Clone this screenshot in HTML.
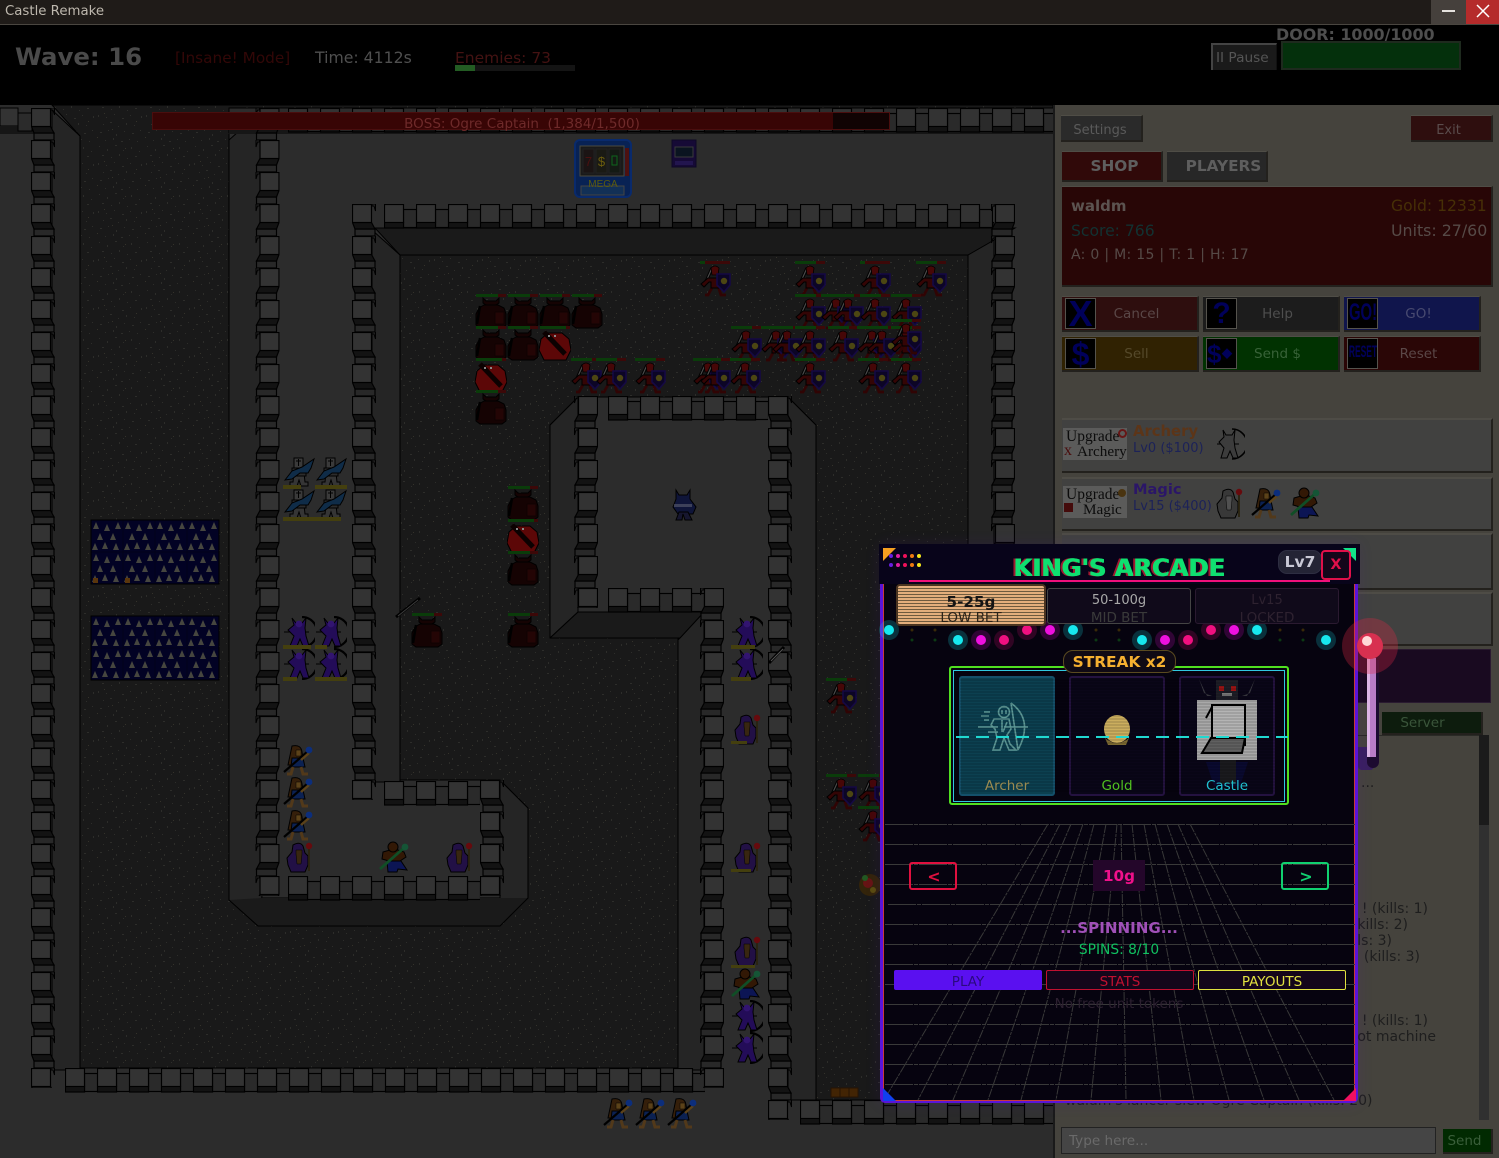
<!DOCTYPE html>
<html><head><meta charset="utf-8"><title>Castle Remake</title>
<style>
html,body{margin:0;padding:0;background:#000;overflow:hidden}
body{width:1499px;height:1158px;position:relative;overflow:hidden;font-family:"DejaVu Sans","Liberation Sans",sans-serif;font-size:13px}
.a,.t{position:absolute}
.t{white-space:pre;line-height:16px}
.c{text-align:center}
.w{position:absolute;left:0;top:0;width:1499px;height:1158px;overflow:hidden}
.sf{font-family:"DejaVu Sans","Liberation Sans",sans-serif;font-weight:bold}
.btn{position:absolute;box-sizing:border-box;border-bottom:2px solid #23211d;border-right:2px solid #23211d;border-top:1px solid #4f4d46;text-align:center}
.ic{position:absolute;left:3px;top:1px;width:31px;height:31px;box-sizing:border-box;background:#000;border:1px solid #55534d;color:#00005a;overflow:hidden;text-align:center;font-family:"Liberation Sans",sans-serif;font-weight:bold}
.ic span{position:absolute;left:50%;white-space:nowrap}
.lab{position:absolute;left:14px;right:0;top:9px;line-height:16px;font-size:13.5px}
.card{position:absolute;left:1062px;width:431px;box-sizing:border-box;background:#414140;border-top:2px solid #4e4c46;border-right:2px solid #23211d;border-bottom:2px solid #23211d}
.up{position:absolute;background:#5b5b5a;width:64px;height:32px;font-family:"Liberation Serif",serif;color:#0c0c0c;overflow:hidden}
.up span{position:absolute;white-space:pre;line-height:15px}
.lg{color:#1e1e1e;font-size:14px}
svg{position:absolute;left:0;top:0}
</style></head><body>

<!-- MAP -->
<svg width="1499" height="1158" viewBox="0 0 1499 1158" style="z-index:1">
<defs>
<pattern id="sp" width="48" height="48" patternUnits="userSpaceOnUse">
<rect width="48" height="48" fill="#191919"/>
<g fill="#2d2d2a"><rect x="3" y="2" width="1" height="1"/><rect x="11" y="5" width="1" height="2"/><rect x="19" y="1" width="2" height="1"/><rect x="27" y="6" width="1" height="1"/><rect x="35" y="3" width="1" height="2"/><rect x="43" y="7" width="1" height="1"/><rect x="6" y="11" width="2" height="1"/><rect x="15" y="13" width="1" height="1"/><rect x="23" y="10" width="1" height="2"/><rect x="31" y="14" width="1" height="1"/><rect x="39" y="12" width="2" height="1"/><rect x="2" y="19" width="1" height="2"/><rect x="10" y="21" width="1" height="1"/><rect x="18" y="18" width="1" height="1"/><rect x="26" y="22" width="2" height="1"/><rect x="34" y="19" width="1" height="1"/><rect x="45" y="20" width="1" height="2"/><rect x="7" y="28" width="1" height="1"/><rect x="14" y="26" width="2" height="1"/><rect x="22" y="30" width="1" height="1"/><rect x="30" y="27" width="1" height="2"/><rect x="38" y="29" width="1" height="1"/><rect x="4" y="36" width="2" height="1"/><rect x="12" y="34" width="1" height="1"/><rect x="20" y="38" width="1" height="2"/><rect x="28" y="35" width="1" height="1"/><rect x="36" y="37" width="2" height="1"/><rect x="44" y="34" width="1" height="1"/><rect x="9" y="44" width="1" height="1"/><rect x="17" y="42" width="1" height="2"/><rect x="25" y="45" width="2" height="1"/><rect x="33" y="43" width="1" height="1"/><rect x="41" y="45" width="1" height="1"/></g>
<g fill="#34322a"><rect x="8" y="17" width="1" height="1"/><rect x="29" y="4" width="1" height="1"/><rect x="40" y="25" width="1" height="1"/><rect x="16" y="33" width="1" height="1"/><rect x="1" y="41" width="1" height="1"/></g>
</pattern>
<pattern id="vw" width="26" height="32" patternUnits="userSpaceOnUse">
<path d="M3 25h20v7H3z" fill="#282828" stroke="#000" stroke-width="1.2"/>
<path d="M0.5 18.5h19L23 25H3z" fill="#131313" stroke="#000" stroke-width="1.2"/>
<rect x=".5" y=".5" width="19" height="18" fill="#333" stroke="#000" stroke-width="1.2"/>
<path d="M20 0h3.5v7L22 2H20z" fill="#282828" stroke="#000"/>
</pattern>
<pattern id="hw" width="32" height="26" patternUnits="userSpaceOnUse">
<rect x="19.5" y="5.5" width="13" height="18" fill="#2a2a2a" stroke="#000" stroke-width="1.2"/>
<rect x=".5" y="18" width="19" height="6" fill="#131313" stroke="#000" stroke-width="1.2"/>
<rect x=".5" y=".5" width="19" height="18" fill="#333" stroke="#000" stroke-width="1.2"/>
</pattern>
<pattern id="spk" width="32" height="32" patternUnits="userSpaceOnUse">
<rect width="32" height="32" fill="#020224"/>
<path d="M5 2l3 7H2zM16 4l3 7h-6zM27 2l3 7h-6zM9 13l3 7H6zM22 13l3 7h-6zM4 23l3 7H1zM14 22l3 7h-6zM25 23l3 7h-6z" fill="#46463f"/>
<path d="M0 0h32v32H0z" fill="none" stroke="#02021a"/>
</pattern>
<g id="sb"><path d="M5 22L13 4" stroke="#000" stroke-width="3.2"/><path d="M5 22L13 4" stroke="#4a4a4a" stroke-width="1.2"/><path d="M14 22L9 31H6M19 22L22 31H27" stroke="#300404" stroke-width="2.8" fill="none"/><path d="M2 20L9 14H23V18H20V24H12V18H10L5 23z" fill="#340505" stroke="#000" stroke-width="1"/><path d="M12 4Q16 0 20 4L19 11H13z" fill="#460707" stroke="#000" stroke-width=".8"/><path d="M18 10h13v11l-6 7-7-7z" fill="#0c0526" stroke="#150944" stroke-width="1.6"/><circle cx="25" cy="17" r="3.2" fill="#4c4612"/></g>
<symbol id="so" viewBox="0 0 32 38"><rect x="1" y="2" width="21" height="3" fill="#0a3c0a"/><rect x="22" y="2" width="9" height="3" fill="#3c0808"/><use href="#sb" y="5"/></symbol>
<symbol id="sr" viewBox="0 0 32 38"><rect x="1" y="2" width="5" height="3" fill="#0a3c0a"/><rect x="6" y="2" width="25" height="3" fill="#3c0808"/><use href="#sb" y="5"/></symbol>
<symbol id="od" viewBox="0 0 32 36"><rect x="1" y="0" width="22" height="3" fill="#0a3c0a"/><rect x="23" y="0" width="8" height="3" fill="#3c0808"/><path d="M8 4v5l3 2h10l3-2V4l-3 3H11zM4 14L9 11H23L29 14L31 20V31L27 34H5L1 31V20z" fill="#150303" stroke="#000"/><rect x="20" y="18" width="9" height="12" fill="#240505" stroke="#100202"/><path d="M5 12L2 30" stroke="#000" stroke-width="2.5"/></symbol>
<symbol id="or" viewBox="0 0 32 36"><rect x="1" y="0" width="26" height="3" fill="#0a3c0a"/><rect x="27" y="0" width="4" height="3" fill="#3c0808"/><path d="M9 7H23L30 13L32 24L27 34H5L0 24L2 13z" fill="#5c0707" stroke="#000"/><path d="M5 6L26 28" stroke="#0c0101" stroke-width="5"/><rect x="9" y="9" width="2" height="2" fill="#888"/><rect x="15" y="9" width="2" height="2" fill="#888"/></symbol>
<symbol id="kn" viewBox="0 0 32 32"><path d="M11 17l-1 9H7v4h7l2-6 2 6h7v-4h-3l-1-9z" fill="#353535" stroke="#000"/><path d="M11 2h9v10h-9z" fill="#3a3a3a" stroke="#000"/><path d="M15.5 3v7M13 5h5" stroke="#000"/><path d="M9 12h14v8H9z" fill="#2c2c2c" stroke="#000"/><path d="M2 24L9 15 19 11 31 3 28 12 25 17 17 17 9 23z" fill="#0f2c48" stroke="#000"/></symbol>
<symbol id="pa" viewBox="0 0 32 32"><path d="M19 1A15 15 0 0 1 19 31" fill="none" stroke="#000" stroke-width="2.2"/><path d="M8 16L26 16M1 16h8" stroke="#000"/><path d="M9 2l4 5h6l4-5-1 10 1 8 3 10h-6l-3-7-3 7H7l4-10-6-6 6-5z" fill="#230c58" stroke="#000"/><circle cx="16" cy="8" r="3.4" fill="#321470"/></symbol>
<symbol id="pb" viewBox="0 0 32 32"><path d="M19 1A15 15 0 0 1 19 31" fill="none" stroke="#000" stroke-width="1.6"/><path d="M4 16H26" stroke="#000"/><path d="M10 2l3 5h6l3-5-1 10 1 8 3 10h-5l-3-7-3 7H8l3-10-5-6 5-5z" fill="#3c3c3c" stroke="#000"/></symbol>
<symbol id="wz" viewBox="0 0 32 32"><path d="M10 4Q17 0 20 5L22 12L25 15V24L22 31H8L5 24 4 17 9 11z" fill="#221045" stroke="#000"/><path d="M13 9h6v4l-1 10h-4l-1-10z" fill="#382610" stroke="#000" stroke-width=".5"/><path d="M26 7V30" stroke="#2a2410" stroke-width="1.8"/><circle cx="26" cy="5" r="3.2" fill="#660a0d"/></symbol>
<symbol id="wg" viewBox="0 0 32 32"><path d="M10 4Q17 0 20 5L22 12L25 15V24L22 31H8L5 24 4 17 9 11z" fill="#383838" stroke="#000"/><path d="M13 9h6v4l-1 10h-4l-1-10z" fill="#505050" stroke="#000" stroke-width=".5"/><path d="M26 7V30" stroke="#2a2410" stroke-width="1.8"/><circle cx="26" cy="5" r="3.2" fill="#660a0d"/></symbol>
<symbol id="rg" viewBox="0 0 32 32"><path d="M10 2Q19 0 20 8L22 21H6z" fill="#351f0a" stroke="#000"/><path d="M14 6h5v6h-5z" fill="#5c4219" stroke="#000" stroke-width=".5"/><path d="M10 14h11l2 9H9z" fill="#0b2152" stroke="#000"/><path d="M11 23l-2 7H5M19 23l2 7h5" stroke="#52391a" stroke-width="3" fill="none"/><path d="M2 28L25 8" stroke="#000" stroke-width="2.2"/><path d="M19 16L27 9" stroke="#5c4219" stroke-width="2.4"/><circle cx="27" cy="6" r="3.4" fill="#0c2e7c"/></symbol>
<symbol id="br" viewBox="0 0 32 32"><path d="M5 11L12 9H20L26 11 28 16 22 20H11L4 18z" fill="#321805" stroke="#000"/><circle cx="15" cy="6" r="5" fill="#321805" stroke="#000"/><path d="M9 20h14l6 9-9-1-1 3h-9z" fill="#0c1554" stroke="#000"/><path d="M2 28L27 6" stroke="#104e26" stroke-width="2.8"/><circle cx="27" cy="6" r="3.4" fill="#155536"/></symbol>
</defs>

<rect x="0" y="105" width="1053" height="1053" fill="#2c2c2c"/>
<!-- bands -->
<g fill="#252525" stroke="#000">
<path d="M52 110L80 136V1070H52z"/>
<path d="M229 140L238 132H262V896L258 926L229 900z"/>
<path d="M372 230L400 255V782H372z"/>
<path d="M500 780L528 808V898L500 926H258L262 898H500z"/>
<path d="M968 255L994 228V1100H968z"/>
<path d="M578 397L550 425V638L578 612z"/>
<path d="M788 397L816 425V1100H788z"/>
<path d="M678 640L704 612V1070H678z"/>
</g>
<path d="M375 228H1015L968 255H400z" fill="#1a1a1a" stroke="#000"/>
<path d="M578 612H704L680 638H550z" fill="#1a1a1a" stroke="#000"/>
<path d="M262 898H500L528 898L500 926H258L229 900z" fill="#1a1a1a"/>
<!-- speckled ground -->
<path d="M52 105H1053V108H229V900L258 926H500L528 898V808L500 780H400V255H968V1100H816V425L788 397H578L550 425V638H678V1068H80V136z" fill="url(#sp)" stroke="#000"/>
<rect x="229" y="127" width="824" height="7" fill="#161616"/>
<rect x="0" y="127" width="36" height="7" fill="#161616"/>
<rect x="18" y="113" width="14" height="18" fill="#2b2b2b" stroke="#000"/>
<rect x="0" y="108" width="18" height="18" fill="#333" stroke="#000"/>
<!-- walls -->
<rect transform="translate(288,108)" width="765" height="26" fill="url(#hw)"/>
<rect transform="translate(384,204)" width="610" height="26" fill="url(#hw)"/>
<rect transform="translate(384,781)" width="96" height="26" fill="url(#hw)"/>
<rect transform="translate(288,876)" width="192" height="26" fill="url(#hw)"/>
<rect transform="translate(608,396)" width="160" height="26" fill="url(#hw)"/>
<rect transform="translate(608,588)" width="96" height="26" fill="url(#hw)"/>
<rect transform="translate(65,1068)" width="640" height="26" fill="url(#hw)"/>
<rect transform="translate(800,1100)" width="253" height="26" fill="url(#hw)"/>
<rect transform="translate(31,108)" width="26" height="980" fill="url(#vw)"/>
<rect transform="translate(279.5,108) scale(-1,1)" width="26" height="788" fill="url(#vw)"/>
<rect transform="translate(352,204)" width="26" height="596" fill="url(#vw)"/>
<rect transform="translate(480,780)" width="26" height="116" fill="url(#vw)"/>
<rect transform="translate(598,396) scale(-1,1)" width="26" height="212" fill="url(#vw)"/>
<rect transform="translate(724,588) scale(-1,1)" width="26" height="500" fill="url(#vw)"/>
<rect transform="translate(768,396)" width="26" height="724" fill="url(#vw)"/>
<rect transform="translate(1015,204) scale(-1,1)" width="26" height="340" fill="url(#vw)"/>
<!-- spikes -->
<rect transform="translate(91,520)" width="128" height="64" fill="url(#spk)" stroke="#000"/>
<rect transform="translate(91,616)" width="128" height="64" fill="url(#spk)" stroke="#000"/>
<g fill="#5a360c"><rect x="93" y="578" width="5" height="5"/><rect x="125" y="578" width="5" height="5"/></g>
<!-- machines -->
<g transform="translate(575,140)">
<rect width="56" height="57" rx="5" fill="#082254" stroke="#092a6c" stroke-width="2"/>
<rect x="5" y="6" width="44" height="30" fill="#1a1a1a" stroke="#4a4a40"/>
<rect x="8" y="9" width="11" height="24" fill="#1b1414" stroke="#222"/><rect x="21" y="9" width="11" height="24" fill="#1a1a14" stroke="#222"/><rect x="34" y="9" width="11" height="24" fill="#141a14" stroke="#222"/>
<text x="13.5" y="26" font-size="13" fill="#4a1010" text-anchor="middle" font-family="Liberation Sans">7</text>
<text x="26.5" y="26" font-size="13" fill="#6a5c0e" text-anchor="middle" font-family="Liberation Sans">$</text>
<rect x="37" y="16" width="5" height="9" fill="none" stroke="#0e661c"/>
<rect x="50" y="8" width="4" height="28" fill="#4c1111"/>
<rect x="6" y="46" width="43" height="9" fill="#123056" stroke="#444"/>
<text x="28" y="47" font-size="10" fill="#5c5c0e" text-anchor="middle" font-family="Liberation Sans">MEGA</text>
</g>
<g transform="translate(672,140)"><rect width="24" height="27" fill="#160a36" stroke="#0e0826"/><rect x="3" y="7" width="18" height="10" fill="#0a1420" stroke="#3a3a3a"/><rect x="3" y="21" width="18" height="4" fill="#22154e"/></g>
<!-- orange crate -->
<g fill="#422404" stroke="#261403"><rect x="831" y="1088" width="9" height="9"/><rect x="840" y="1088" width="9" height="9"/><rect x="849" y="1088" width="9" height="9"/></g>
<!-- enemies -->
<g>
<use href="#sr" x="699" y="259" width="32" height="38"/>
<use href="#so" x="794" y="259" width="32" height="38"/><use href="#sr" x="859" y="259" width="32" height="38"/><use href="#so" x="915" y="259" width="32" height="38"/>
<use href="#so" x="794" y="292" width="32" height="38"/><use href="#so" x="820" y="292" width="32" height="38"/><use href="#so" x="832" y="292" width="32" height="38"/><use href="#so" x="859" y="292" width="32" height="38"/><use href="#so" x="890" y="292" width="32" height="38"/>
<use href="#so" x="730" y="324" width="32" height="38"/><use href="#so" x="760" y="324" width="32" height="38"/><use href="#so" x="771" y="324" width="32" height="38"/><use href="#so" x="794" y="324" width="32" height="38"/><use href="#so" x="827" y="324" width="32" height="38"/><use href="#so" x="856" y="324" width="32" height="38"/><use href="#so" x="866" y="324" width="32" height="38"/><use href="#so" x="890" y="324" width="32" height="38"/><use href="#so" x="890" y="317" width="32" height="38"/>
<use href="#so" x="570" y="356" width="32" height="38"/><use href="#so" x="595" y="356" width="32" height="38"/><use href="#so" x="634" y="356" width="32" height="38"/><use href="#so" x="692" y="356" width="32" height="38"/><use href="#so" x="699" y="356" width="32" height="38"/><use href="#so" x="729" y="356" width="32" height="38"/><use href="#so" x="794" y="356" width="32" height="38"/><use href="#so" x="857" y="356" width="32" height="38"/><use href="#so" x="890" y="356" width="32" height="38"/>
<use href="#od" x="475" y="294" width="32" height="36"/><use href="#od" x="507" y="294" width="32" height="36"/><use href="#od" x="539" y="294" width="32" height="36"/><use href="#od" x="571" y="294" width="32" height="36"/>
<use href="#od" x="475" y="326" width="32" height="36"/><use href="#od" x="507" y="326" width="32" height="36"/><use href="#or" x="539" y="326" width="32" height="36"/>
<use href="#or" x="475" y="358" width="32" height="36"/><use href="#od" x="475" y="390" width="32" height="36"/>
<use href="#od" x="507" y="486" width="32" height="36"/><use href="#or" x="507" y="519" width="32" height="36"/><use href="#od" x="507" y="551" width="32" height="36"/>
<use href="#od" x="411" y="613" width="32" height="36"/><use href="#od" x="507" y="613" width="32" height="36"/>
<use href="#so" x="825" y="676" width="32" height="38"/><use href="#so" x="825" y="772" width="32" height="38"/><use href="#so" x="857" y="772" width="32" height="38"/><use href="#so" x="857" y="804" width="32" height="38"/>
</g>
<path d="M396 617L420 598" stroke="#000" stroke-width="3"/><path d="M398 616L418 600" stroke="#3c3c3c"/>
<path d="M769 663L784 647" stroke="#000" stroke-width="3"/><path d="M771 661L783 649" stroke="#555"/>
<g><circle cx="870" cy="885" r="11" fill="#33240a"/><circle cx="868" cy="883" r="5" fill="#661414"/><circle cx="865" cy="878" r="3" fill="#225822"/><circle cx="873" cy="890" r="3" fill="#5a4c0e"/></g>
<!-- friendlies -->
<g>
<use href="#kn" x="283" y="456" width="32" height="32"/><use href="#kn" x="315" y="456" width="32" height="32"/><use href="#kn" x="283" y="488" width="32" height="32"/><use href="#kn" x="315" y="488" width="32" height="32"/>
<g fill="#443f0e"><rect x="283" y="485" width="18" height="4"/><rect x="315" y="485" width="32" height="4"/><rect x="283" y="517" width="32" height="4"/><rect x="315" y="517" width="26" height="4"/></g>
<use href="#pa" x="283" y="616" width="32" height="32"/><use href="#pa" x="315" y="616" width="32" height="32"/><use href="#pa" x="283" y="648" width="32" height="32"/><use href="#pa" x="315" y="648" width="32" height="32"/>
<use href="#pa" x="731" y="616" width="32" height="32"/><use href="#pa" x="731" y="648" width="32" height="32"/><use href="#pa" x="731" y="1000" width="32" height="32"/><use href="#pa" x="731" y="1032" width="32" height="32"/>
<g fill="#443f0e"><rect x="283" y="645" width="28" height="4"/><rect x="315" y="645" width="12" height="4"/><rect x="283" y="677" width="14" height="4"/><rect x="315" y="677" width="32" height="4"/><rect x="731" y="645" width="24" height="4"/><rect x="731" y="677" width="20" height="4"/></g>
<use href="#rg" x="282" y="744" width="32" height="32"/><use href="#rg" x="282" y="776" width="32" height="32"/><use href="#rg" x="282" y="809" width="32" height="32"/>
<use href="#rg" x="602" y="1097" width="32" height="32"/><use href="#rg" x="634" y="1097" width="32" height="32"/><use href="#rg" x="666" y="1097" width="32" height="32"/>
<use href="#wz" x="283" y="841" width="32" height="32"/><use href="#wz" x="443" y="841" width="32" height="32"/><use href="#wz" x="731" y="713" width="32" height="32"/><use href="#wz" x="731" y="841" width="32" height="32"/><use href="#wz" x="731" y="935" width="32" height="32"/>
<g fill="#443f0e"><rect x="731" y="741" width="16" height="3"/><rect x="731" y="869" width="20" height="3"/><rect x="731" y="965" width="24" height="3"/></g>
<use href="#br" x="378" y="841" width="32" height="32"/><use href="#br" x="730" y="968" width="32" height="32"/>
<g transform="translate(670,490)"><path d="M6 0l3 5h8l3-5v9l6 8-3 7H8l-5-7 3-8z" fill="#0f1539" stroke="#000"/><rect x="4" y="14" width="18" height="3" fill="#aaa" opacity=".3"/><path d="M9 22l-3 8h6l1-6 2 6h7l-4-8z" fill="#16162f" stroke="#000"/></g>
</g>
</svg>

<!-- TITLE BAR & HUD -->
<div class="a" style="left:0;top:0;width:1499px;height:105px;background:#000;z-index:2"></div>
<div class="a" style="left:0;top:0;width:1499px;height:24px;background:#1f1b18;border-bottom:1px solid #4a4640;z-index:3"></div>
<div class="t" style="left:5px;top:3px;color:#beb8ae;font-size:13.3px;z-index:4;line-height:18px">Castle Remake</div>
<div class="a" style="left:1431px;top:0;width:35px;height:24px;background:#45403c;z-index:4"><div class="a" style="left:11px;top:10px;width:13px;height:2px;background:#e5e2de"></div></div>
<div class="a" style="left:1466px;top:0;width:33px;height:24px;background:#b52b2b;z-index:4;overflow:hidden"><svg width="33" height="24" viewBox="0 0 33 24"><path d="M11 5L23 17M23 5L11 17" stroke="#fff" stroke-width="1.5"/></svg></div>
<div class="t" style="left:15px;top:42px;line-height:30px;font-size:24.4px;font-weight:bold;color:#4a4a4a;z-index:4">Wave: 16</div>
<div class="t" style="left:175px;top:50px;font-size:15.3px;color:#320707;z-index:4">[Insane! Mode]</div>
<div class="t" style="left:315px;top:50px;font-size:15.7px;color:#4f4f4f;z-index:4">Time: 4112s</div>
<div class="t" style="left:455px;top:50px;font-size:15.5px;color:#441212;z-index:4">Enemies: 73</div>
<div class="a" style="left:455px;top:65px;width:120px;height:6px;background:#141414;z-index:4"><div style="width:20px;height:6px;background:#235c23"></div></div>
<div class="t sf" style="left:1276px;top:27px;font-size:15.9px;color:#4e4e4e;z-index:4">DOOR: 1000/1000</div>
<div class="a" style="left:1211px;top:43px;width:66px;height:27px;box-sizing:border-box;background:#1a1a1a;border-left:2px solid #444;border-top:2px solid #444;border-right:1px solid #111;color:#555;line-height:26px;padding-left:3px;font-size:13.7px;z-index:4;white-space:pre">II Pause</div>
<div class="a" style="left:1281px;top:41px;width:180px;height:29px;box-sizing:border-box;background:#04300c;border:2px solid #1e2a1e;z-index:4"></div>

<!-- BOSS BAR -->
<div class="a" style="left:152px;top:112px;width:738px;height:18px;box-sizing:border-box;background:#100303;border:1px solid #4a0e0e;z-index:4"><div style="width:680px;height:16px;background:#380505"></div></div>
<div class="t c" style="left:153px;top:116px;width:738px;color:#6e2a2a;font-size:13.5px;z-index:5">BOSS: Ogre Captain  (1,384/1,500)</div>

<!-- SIDEBAR -->
<div class="a" style="left:1053px;top:105px;width:446px;height:1053px;background:#45433d;border-left:2px solid #1a1a1a;box-sizing:border-box;z-index:2"></div>
<div class="w" style="z-index:3">
<div class="btn" style="left:1061px;top:115px;width:82px;height:27px;background:#2a2a2a;color:#5a5a5a;line-height:29px;padding-right:2px">Settings</div>
<div class="btn" style="left:1411px;top:115px;width:82px;height:27px;background:#2e0e0e;color:#5a4c4c;line-height:29px;padding-right:5px">Exit</div>
<div class="btn sf" style="left:1062px;top:151px;width:101px;height:31px;background:#300909;color:#5e5e5e;line-height:28px;font-size:15.3px;padding-left:6px">SHOP</div>
<div class="btn sf" style="left:1167px;top:151px;width:101px;height:31px;background:#272727;color:#5e5e5e;line-height:28px;font-size:15.3px;padding-left:14px">PLAYERS</div>
<div class="btn" style="left:1062px;top:186px;width:431px;height:101px;background:#280606"></div>
<div class="t sf" style="left:1071px;top:198px;font-size:15px;color:#5c5350">waldm</div>
<div class="t" style="left:1071px;top:223px;font-size:15.6px;color:#123232">Score: 766</div>
<div class="t" style="left:1071px;top:247px;font-size:14px;letter-spacing:.3px;color:#564a47">A: 0 | M: 15 | T: 1 | H: 17</div>
<div class="t" style="left:1391px;top:198px;font-size:15.6px;color:#462f06">Gold: 12331</div>
<div class="t" style="left:1391px;top:223px;font-size:15.8px;color:#564a47">Units: 27/60</div>

<div class="btn" style="left:1062px;top:296px;width:137px;height:36px;background:#2e0e0e"><div class="ic" style="font-size:36px;line-height:30px">X</div><div class="lab" style="color:#5a4747">Cancel</div></div>
<div class="btn" style="left:1203px;top:296px;width:137px;height:36px;background:#1c1c1c"><div class="ic" style="font-size:30px;line-height:30px">?</div><div class="lab" style="color:#4e4e4e">Help</div></div>
<div class="btn" style="left:1344px;top:296px;width:137px;height:36px;background:#10154c"><div class="ic" style="font-size:24px;line-height:28px"><span style="transform:translateX(-50%) scaleX(.62)">GO!</span></div><div class="lab" style="color:#484a70">GO!</div></div>
<div class="btn" style="left:1062px;top:336px;width:137px;height:36px;background:#302202"><div class="ic" style="font-size:32px;line-height:30px">$</div><div class="lab" style="color:#55492a">Sell</div></div>
<div class="btn" style="left:1203px;top:336px;width:137px;height:36px;background:#013201"><div class="ic" style="font-size:26px;line-height:30px;text-align:left">$<span style="left:15px;font-size:13px;line-height:28px">◆</span></div><div class="lab" style="color:#386238">Send $</div></div>
<div class="btn" style="left:1344px;top:336px;width:137px;height:36px;background:#2a0606"><div class="ic" style="font-size:17px;line-height:26px"><span style="transform:translateX(-50%) scaleX(.5)">RESET</span></div><div class="lab" style="color:#5a4747">Reset</div></div>

<div class="card" style="top:418px;height:55px"></div>
<div class="up" style="left:1063px;top:428px"><span style="left:3px;top:1px;font-size:15.5px">Upgrade</span><span style="left:14px;top:16px;font-size:15.2px">Archery</span><span style="left:1px;top:15px;font-size:16px;color:#4a0c0c">x</span></div>
<div class="a" style="left:1118px;top:429px;width:9px;height:9px;border-radius:50%;box-sizing:border-box;border:2px solid #661616"></div>
<div class="t sf" style="left:1133px;top:424px;font-size:14.8px;color:#5c3518">Archery</div>
<div class="t" style="left:1133px;top:441px;font-size:13px;color:#1c2258">Lv0 ($100)</div>
<svg width="32" height="32" style="left:1213px;top:428px" viewBox="0 0 32 32"><use href="#pb" width="32" height="32"/></svg>

<div class="card" style="top:477px;height:54px"></div>
<div class="up" style="left:1063px;top:486px"><span style="left:3px;top:1px;font-size:15.5px">Upgrade</span><span style="left:20px;top:16px;font-size:15.2px">Magic</span></div>
<div class="a" style="left:1064px;top:503px;width:9px;height:9px;background:#440b0b"></div>
<div class="a" style="left:1118px;top:489px;width:8px;height:8px;border-radius:50%;background:#4a3410"></div>
<div class="t sf" style="left:1133px;top:482px;font-size:14.6px;color:#2b1668">Magic</div>
<div class="t" style="left:1133px;top:499px;font-size:13px;color:#1c2258">Lv15 ($400)</div>
<svg width="32" height="32" style="left:1213px;top:487px" viewBox="0 0 32 32"><use href="#wg" width="32" height="32"/></svg>
<svg width="32" height="32" style="left:1250px;top:487px" viewBox="0 0 32 32"><use href="#rg" width="32" height="32"/></svg>
<svg width="32" height="32" style="left:1289px;top:487px" viewBox="0 0 32 32"><use href="#br" width="32" height="32"/></svg>

<div class="card" style="top:533px;height:57px"></div>
<div class="card" style="top:592px;height:54px"></div>
<div class="a" style="left:1062px;top:649px;width:429px;height:54px;background:#190a20;border:1px solid #2a1a30;box-sizing:border-box"></div>

<div class="btn" style="left:1382px;top:712px;width:101px;height:23px;background:#0d1c0d;color:#3a553a;line-height:23px;border-top:none;padding-right:18px;font-size:13.5px">Server</div>
<div class="a" style="left:1062px;top:735px;width:427px;height:1px;background:#2a2a26"></div>
<div class="a" style="left:1479px;top:735px;width:10px;height:385px;background:#303030"><div style="width:10px;height:90px;background:#1b1b1b"></div></div>
<div class="a" style="left:1358px;top:747px;width:16px;height:23px;background:#3a2060;border-radius:0 0 4px 4px"></div>
<div class="t lg" style="left:1361px;top:775px">...</div>
<div class="t lg" style="right:71px;top:901px">waldm's archer slew Ogre   ! (kills: 1)</div>
<div class="t lg" style="right:91px;top:917px">waldm's archer slew Ogre (kills: 2)</div>
<div class="t lg" style="right:107px;top:933px">waldm's mage slew Ogre (kills: 3)</div>
<div class="t lg" style="right:79px;top:949px">waldm's ranger slew Ogre    (kills: 3)</div>
<div class="t lg" style="right:71px;top:1013px">waldm's archer slew Ogre   ! (kills: 1)</div>
<div class="t lg" style="right:63px;top:1029px">waldm won 50g on the slot machine</div>
<div class="t lg" style="left:1065px;top:1093px">waldm's lancer slew Ogre Captain (kills: 20)</div>

<div class="a" style="left:1061px;top:1127px;width:375px;height:27px;box-sizing:border-box;background:#454545;border:1px solid #222;color:#6a6a6a;line-height:27px;padding-left:7px;font-size:13.6px">Type here...</div>
<div class="btn" style="left:1443px;top:1129px;width:50px;height:25px;background:#012a01;color:#3a5f3a;line-height:25px;border-top:none;padding-right:5px;font-size:13.5px">Send</div>
</div>

<!-- MODAL -->
<div class="a" style="left:880px;top:545px;width:478px;height:558px;box-sizing:border-box;background:#06030f;border:3px solid #5a14d8;border-top:none;border-radius:0 0 5px 5px;box-shadow:0 0 16px rgba(90,20,200,.12);z-index:6"></div>
<div class="a" style="left:883px;top:584px;width:472px;height:517px;box-sizing:border-box;border:1px solid #c83a3a;border-top:none;z-index:7"></div>
<svg width="1499" height="1158" viewBox="0 0 1499 1158" style="z-index:7">
<g stroke="#393939" stroke-dasharray="28 1 4 1">
<path d="M885 824.5H1355M885 844.5H1355M885 864.5H1355M885 884.5H1355M888 904.5H1355M885 924.5H1355M885 944.5H1355M885 964.5H1355M885 984.5H1355M885 1004.5H1355M885 1024.5H1355M885 1044.5H1355M885 1064.5H1355M885 1084.5H1355"/>
</g>
<g stroke="#393939" stroke-dasharray="9 1 3 1" fill="none">
<path d="M1048 824L884 1100M1060 824L918 1100M1071 824L953 1100M1083 824L988 1100M1094 824L1021 1100M1106 824L1056 1100M1117 824L1091 1100M1121 824L1126 1100M1132 824L1161 1100M1144 824L1194 1100M1155 824L1229 1100M1167 824L1264 1100M1178 824L1299 1100M1190 824L1334 1100"/>
</g>
</svg>
<div class="a" style="left:879px;top:544px;width:481px;height:40px;background:#08041a;z-index:8"></div>
<svg width="1499" height="1158" viewBox="0 0 1499 1158" style="z-index:9">
<path d="M883 548H896L883 561z" fill="#f5a020"/>
<path d="M1343 548H1356V561z" fill="#12e488"/>
<path d="M883 1088L896 1101H883z" fill="#1040f0"/>
<path d="M1356 1088V1101H1343z" fill="#f01060"/>
<g><circle cx="891" cy="556" r="2" fill="#6a1fe0"/><circle cx="898" cy="556" r="2" fill="#e01fa0"/><circle cx="905" cy="556" r="2" fill="#f0105a"/><circle cx="912" cy="556" r="2" fill="#f07a10"/><circle cx="919" cy="556" r="2" fill="#f5e61a"/><circle cx="891" cy="565" r="2" fill="#6a1fe0"/><circle cx="898" cy="565" r="2" fill="#e01fa0"/><circle cx="905" cy="565" r="2" fill="#f0105a"/><circle cx="912" cy="565" r="2" fill="#f07a10"/><circle cx="919" cy="565" r="2" fill="#f5e61a"/></g>
<rect x="909" y="580" width="421" height="2" fill="#f0107a"/>
<!-- bulbs -->
<g fill="#3a2a08"><circle cx="912" cy="630" r="1.5"/><circle cx="935" cy="630" r="1.5"/><circle cx="1096" cy="630" r="1.5"/><circle cx="1119" cy="630" r="1.5"/><circle cx="1280" cy="630" r="1.5"/><circle cx="1303" cy="630" r="1.5"/></g>
<g fill="#0c3a14"><circle cx="912" cy="640" r="1.5"/><circle cx="935" cy="640" r="1.5"/><circle cx="1096" cy="640" r="1.5"/><circle cx="1119" cy="640" r="1.5"/><circle cx="1280" cy="640" r="1.5"/><circle cx="1303" cy="640" r="1.5"/></g>
<g fill="#17e8ee"><circle cx="889" cy="630" r="5"/><circle cx="1073" cy="630" r="5"/><circle cx="1257" cy="630" r="5"/><circle cx="958" cy="640" r="5"/><circle cx="1142" cy="640" r="5"/><circle cx="1326" cy="640" r="5"/></g>
<g fill="#17e8ee" opacity=".2"><circle cx="889" cy="630" r="10"/><circle cx="1073" cy="630" r="10"/><circle cx="1257" cy="630" r="10"/><circle cx="958" cy="640" r="10"/><circle cx="1142" cy="640" r="10"/><circle cx="1326" cy="640" r="10"/></g>
<g fill="#ee10e0"><circle cx="1050" cy="630" r="5"/><circle cx="1234" cy="630" r="5"/><circle cx="981" cy="640" r="5"/><circle cx="1165" cy="640" r="5"/></g>
<g fill="#ee10e0" opacity=".18"><circle cx="1050" cy="630" r="10"/><circle cx="1234" cy="630" r="10"/><circle cx="981" cy="640" r="10"/><circle cx="1165" cy="640" r="10"/></g>
<g fill="#f01080"><circle cx="1027" cy="630" r="5"/><circle cx="1211" cy="630" r="5"/><circle cx="1004" cy="640" r="5"/><circle cx="1188" cy="640" r="5"/></g>
<g fill="#f01080" opacity=".18"><circle cx="1027" cy="630" r="10"/><circle cx="1211" cy="630" r="10"/><circle cx="1004" cy="640" r="10"/><circle cx="1188" cy="640" r="10"/></g>
<!-- reels -->
<rect x="950" y="667" width="338" height="137" rx="2" fill="#06030f" stroke="#50e020" stroke-width="2"/>
<rect x="953.5" y="670.5" width="331" height="131" fill="none" stroke="#30c8e0"/>
<rect x="960" y="677" width="94" height="118" rx="2" fill="#0c4050" stroke="#14506a" stroke-width="2"/>
<rect x="1070" y="677" width="94" height="118" rx="2" fill="#0a0618" stroke="#241240" stroke-width="2"/>
<rect x="1180" y="677" width="94" height="118" rx="2" fill="#0a0618" stroke="#241240" stroke-width="2"/>
<!-- archer ghost -->
<g fill="none" stroke="#5e9a98" stroke-width="1.6">
<circle cx="1004" cy="712" r="5.5"/><path d="M1001 707h6M1002 710v4M1006 710v4"/><path d="M999 719h10l2 10-4 6 3 9 6 6h-7l-5-12-4 12h-7l4-12-2-9-4-4 3-6z"/><path d="M1002 720v12M1007 722l-4 10"/>
<path d="M1011 703Q1034 720 1018 750"/><path d="M1011 703L1018 750"/><path d="M984 712h6M981 716h8M984 720h5"/><path d="M978 727h20M1004 727h24M988 732h10"/>
</g>
<!-- coin -->
<ellipse cx="1117" cy="729" rx="13" ry="14" fill="#cbae5e"/><path d="M1105 738Q1117 748 1129 738L1126 745H1108z" fill="#7c6a32"/>
<!-- demon + castle -->
<path d="M1199 679l5 14 8 3h-5zM1255 679l-5 14-8 3h5z" fill="#3a3a42"/>
<path d="M1216 680h22v20h-22z" fill="#1e1e26"/><rect x="1219" y="686" width="5" height="5" fill="#9a1414"/><rect x="1231" y="686" width="5" height="5" fill="#9a1414"/><rect x="1222" y="693" width="10" height="3" fill="#777"/>
<path d="M1206 762h42l-8 24h-26z" fill="#0a0a30"/><rect x="1220" y="760" width="16" height="24" fill="#1a1a1e"/>
<rect x="1197" y="700" width="60" height="60" fill="#a8a8a8"/>
<path d="M1212 705h33v40h-33z" fill="#b4b4b4" stroke="#000" stroke-width="2"/>
<path d="M1211 738h34l-3 15h-40z" fill="#606060" stroke="#000" stroke-width="2"/>
<path d="M1206 718l6-11v11" fill="none" stroke="#000" stroke-width="2"/>
<!-- scanlines -->
<g opacity=".22" stroke="#000"><path d="M960 680H1275M960 683H1275M960 686H1275M960 689H1275M960 692H1275M960 695H1275M960 698H1275M960 701H1275M960 704H1275M960 707H1275M960 710H1275M960 713H1275M960 716H1275M960 719H1275M960 722H1275M960 725H1275M960 728H1275M960 731H1275M960 734H1275M960 737H1275M960 740H1275M960 743H1275M960 746H1275M960 749H1275M960 752H1275M960 755H1275M960 758H1275M960 761H1275M960 764H1275M960 767H1275M960 770H1275M960 773H1275M960 776H1275M960 779H1275M960 782H1275M960 785H1275M960 788H1275M960 791H1275"/></g>
<path d="M956 737H1288" stroke="#20d8d0" stroke-width="2" stroke-dasharray="13 7"/>
<!-- lever -->
<rect x="1376" y="660" width="3" height="100" fill="#1a0a30"/>
<rect x="1367" y="658" width="9" height="99" fill="#b87cc8"/><rect x="1367" y="658" width="3" height="99" fill="#dcb4e6"/>
<path d="M1367 757h12v5a5 5 0 0 1-12 0z" fill="#1c0a30"/>
<circle cx="1370" cy="646" r="28" fill="#e02846" opacity=".3"/>
<circle cx="1370" cy="646" r="13" fill="#d83050"/>
<circle cx="1367" cy="641" r="5" fill="#ffd8d8"/>
</svg>

<div class="w" style="z-index:10">
<div class="t" style="left:1011px;top:554px;width:216px;text-align:center;line-height:28px;font-weight:bold;font-size:24.2px;color:#0fe070;text-shadow:-2px 0 0 #a01830,1px 0 0 #0fe070">KING'S ARCADE</div>
<div class="a" style="left:1278px;top:550px;width:44px;height:24px;border-radius:9px;background:#242435;color:#c9c9d6;text-align:center;line-height:23px;font-weight:bold;font-size:15.5px;border:1px solid #2e2e42;box-sizing:border-box">Lv7</div>
<div class="a" style="left:1321px;top:550px;width:30px;height:30px;box-sizing:border-box;border:2px solid #e0104a;border-radius:4px;background:#14061a;color:#e0104a;text-align:center;line-height:27px;font-weight:bold;font-size:14.5px">X</div>

<div class="a" style="left:896px;top:584px;width:150px;height:42px;box-sizing:border-box;border:2px solid #4a3420;border-radius:4px;background:repeating-linear-gradient(#e3ae7c 0,#e3ae7c 2px,#6e5a3e 2px,#6e5a3e 3px)"></div>
<div class="t c sf" style="left:896px;top:594px;width:150px;font-size:15.2px;color:#141414">5-25g</div>
<div class="t c" style="left:896px;top:610px;width:150px;font-size:13.5px;color:#2a2218">LOW BET</div>
<div class="a" style="left:1047px;top:588px;width:144px;height:36px;box-sizing:border-box;border:1px solid #444;border-radius:3px;background:#100a1a"></div>
<div class="t c" style="left:1047px;top:593px;width:144px;color:#a8a8a8">50-100g</div>
<div class="t c" style="left:1047px;top:610px;width:144px;color:#3a3a3a;font-size:13.5px">MID BET</div>
<div class="a" style="left:1195px;top:588px;width:144px;height:36px;box-sizing:border-box;border:1px solid #2a1a30;border-radius:3px;background:#100a1a"></div>
<div class="t c" style="left:1195px;top:593px;width:144px;color:#2e2230">Lv15</div>
<div class="t c" style="left:1195px;top:610px;width:144px;color:#2e2230;font-size:13.5px">LOCKED</div>

<div class="a sf" style="left:1063px;top:650px;width:113px;height:23px;box-sizing:border-box;border:1px solid #5a4a20;border-radius:10px;background:#100a14;color:#f5b030;text-align:center;line-height:23px;font-size:15.4px">STREAK x2</div>
<div class="t c" style="left:959px;top:778px;width:96px;color:#9a8a50;font-size:13.5px">Archer</div>
<div class="t c" style="left:1069px;top:778px;width:96px;color:#50c020;font-size:13.5px">Gold</div>
<div class="t c" style="left:1179px;top:778px;width:96px;color:#20c0d0;font-size:13.5px">Castle</div>

<div class="a" style="left:909px;top:862px;width:48px;height:28px;box-sizing:border-box;border:2px solid #e0103f;border-radius:3px;text-align:center;color:#e0103f;line-height:26px;font-weight:bold;font-size:16px;padding-left:2px">&lt;</div>
<div class="a" style="left:1281px;top:862px;width:48px;height:28px;box-sizing:border-box;border:2px solid #10d070;border-radius:3px;text-align:center;color:#10d070;line-height:26px;font-weight:bold;font-size:16px;padding-left:2px">&gt;</div>
<div class="a sf" style="left:1093px;top:860px;width:52px;height:31px;background:#24062a;text-align:center;color:#f0108a;line-height:33px;font-size:15.2px">10g</div>
<div class="t c sf" style="left:880px;top:920px;width:478px;font-size:15.1px;color:#a050b8">...SPINNING...</div>
<div class="t c" style="left:880px;top:942px;width:478px;color:#10c060;font-size:13.8px">SPINS: 8/10</div>
<div class="a" style="left:894px;top:970px;width:148px;height:20px;background:#5a10f0;border-radius:2px;text-align:center;color:#2a0a80;line-height:24px;font-size:13.5px">PLAY</div>
<div class="a" style="left:1046px;top:970px;width:148px;height:20px;box-sizing:border-box;border:1px solid #c01030;border-radius:2px;background:#14061a;text-align:center;color:#c01030;line-height:22px;font-size:13.5px">STATS</div>
<div class="a" style="left:1198px;top:970px;width:148px;height:20px;box-sizing:border-box;border:1px solid #e0e040;border-radius:2px;background:#14061a;text-align:center;color:#e0e040;line-height:22px;font-size:13.5px">PAYOUTS</div>
<div class="t c" style="left:880px;top:996px;width:478px;color:#2c2030;font-size:13.5px">No free unit tokens</div>
</div>
</body></html>
